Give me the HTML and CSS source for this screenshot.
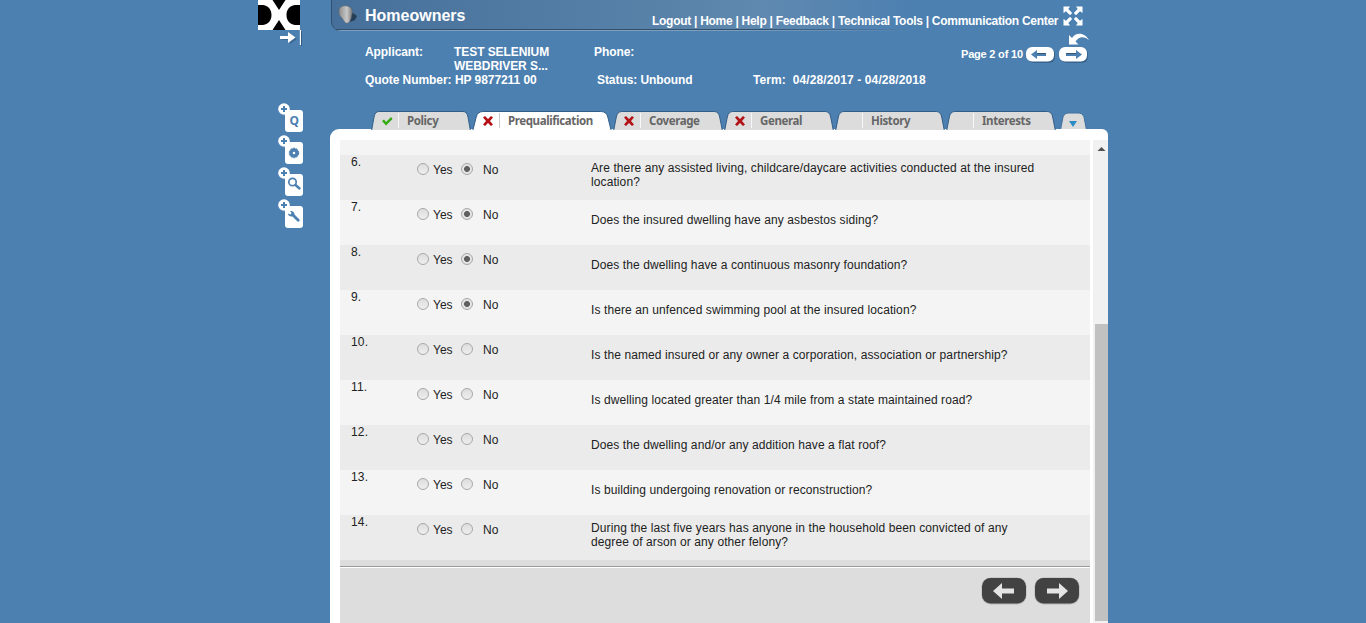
FILE: index.html
```html
<!DOCTYPE html>
<html lang="en">
<head>
<meta charset="utf-8">
<title>Homeowners</title>
<link rel="stylesheet" href="styles.css">
</head>
<body>
<div class="page">
  <aside class="side">
    <svg class="logo" width="42" height="30" viewBox="0 0 42 30"><path fill="#fff" d="M0 0H42V30H0Z"/><path d="M0 5H5C11 6 13.500 10 13.500 15S11 24 5 25H0ZM42 5H37C31 6 28.500 10 28.500 15S31 24 37 25H42ZM14.500 0H27.500L21 10ZM14.500 30H27.500L21 20Z"/></svg>
    <svg class="collapse" width="23" height="16" viewBox="0 0 23 16"><path d="M3 8H11V4L18 9L11 14V10H3Z" fill="#345c82" opacity=".7"/><path d="M1 6H9V2L16.500 7.500L9 13V9H1Z" fill="#fff"/><path d="M21.500 0V15" stroke="#fff" stroke-width="1.300"/><path d="M22.500 1V16" stroke="#345c82"/></svg>
    <nav class="tools">
      <svg width="26" height="32" viewBox="0 0 26 32"><use href="#tile"/><text class="q" x="11.500" y="22">Q</text></svg>
      <svg width="26" height="32" viewBox="0 0 26 32"><use href="#tile"/><circle cx="16" cy="18" r="3" fill="none" stroke="#4c80b1" stroke-width="3.400"/><circle cx="16" cy="18" r="4.800" fill="none" stroke="#4c80b1" stroke-width="1" stroke-dasharray="2 1.016"/></svg>
      <svg width="26" height="32" viewBox="0 0 26 32"><use href="#tile"/><circle cx="14.500" cy="15" r="3.700" fill="none" stroke="#4c80b1" stroke-width="1.700"/><path d="M17.500 18L21.500 21.500" stroke="#4c80b1" stroke-width="2.400" stroke-linecap="round"/></svg>
      <svg width="26" height="32" viewBox="0 0 26 32"><use href="#tile"/><path d="M10 14.500L12.500 15.500L13.500 14L12 12C14.500 11.500 16.500 13 16.500 15.500L21.500 20.500C22 22 21 23 19.500 22.500L14.500 17.500C12 18 10 16.500 10 14.500Z" fill="#4c80b1"/></svg>
    </nav>
  </aside>
  <main class="main">
    <header class="bar">
      <svg class="bulb" width="20" height="20" viewBox="0 0 20 20"><path d="M12 6L15 8L19 11L17 15L12 17Z" fill="#263e55"/><path d="M1 7C0 2 5 0 9 1C14 2 15 6 14 9C13 12 13 17 10 18C7 19 6 16 4 13C2 11 1 10 1 7Z" fill="url(#bulb)" stroke="#596570" stroke-width=".6"/></svg>
      <h1>Homeowners</h1>
      <div class="links">Logout | Home | Help | Feedback | Technical Tools | Communication Center</div>
      <svg class="expand" width="20" height="20" viewBox="0 0 20 20"><g fill="#fff"><path id="ex" d="M.500 .500H7L5.300 3L9.200 7L7 9.200L3 5.300L.500 7Z"/><use href="#ex" transform="matrix(-1 0 0 1 20 0)"/><use href="#ex" transform="matrix(1 0 0 -1 0 20)"/><use href="#ex" transform="rotate(180 10 10)"/></g></svg>
    </header>
    <section class="info">
      <b>Applicant:</b><span class="b">TEST SELENIUM<br>WEBDRIVER S...</span><b>Phone:</b><i></i>
      <b>Quote Number:</b><span class="b quote">HP 9877211 00</span><b class="status">Status: Unbound</b><b class="term">Term:&nbsp; 04/28/2017 - 04/28/2018</b>
      <div class="pager">
        <svg class="undo" width="22" height="14" viewBox="0 0 22 14"><path d="M1 3V12.500H10.500L7.500 9.500C11 4 17 4 21 8.500C18 1 8 -1 4 6Z" fill="#fff"/></svg>
        <div class="pages"><span>Page 2 of 10</span>
        <svg width="30" height="17" viewBox="0 0 30 17"><rect x="2" y="2" width="27" height="15" rx="6" fill="#37638c"/><rect x="0" y="1" width="28" height="14.500" rx="6" fill="#fff"/><path d="M5 8.500L11 4V7.500H20V10H11V13Z" fill="#4c80b1"/><path d="M11 7.500H20" stroke="#345674"/></svg>
        <svg width="30" height="17" viewBox="0 0 30 17"><rect x="2" y="2" width="27" height="15" rx="6" fill="#37638c"/><rect x="0" y="1" width="28" height="14.500" rx="6" fill="#fff"/><path d="M23 8.500L17 4V7.500H7V10H17V13Z" fill="#4c80b1"/><path d="M7 7.500H17" stroke="#345674"/></svg></div>
      </div>
    </section>
    <nav class="tabs">
      <div class="tab t1"><svg class="shape" viewBox="0 0 100 20" preserveAspectRatio="none"><use href="#tab"/></svg><svg class="mark" viewBox="0 0 12 12"><path d="M1 6L3 4.500L5 7L10 2L11.500 4L5 10.500Z" fill="#3a1"/></svg><span>Policy</span></div>
      <div class="tab t2 active"><svg class="shape" viewBox="0 0 100 20" preserveAspectRatio="none"><use href="#tab"/></svg><svg class="mark" viewBox="0 0 12 12"><use href="#cross"/></svg><span>Prequalification</span></div>
      <div class="tab"><svg class="shape" viewBox="0 0 100 20" preserveAspectRatio="none"><use href="#tab"/></svg><svg class="mark" viewBox="0 0 12 12"><use href="#cross"/></svg><span>Coverage</span></div>
      <div class="tab"><svg class="shape" viewBox="0 0 100 20" preserveAspectRatio="none"><use href="#tab"/></svg><svg class="mark" viewBox="0 0 12 12"><use href="#cross"/></svg><span>General</span></div>
      <div class="tab"><svg class="shape" viewBox="0 0 100 20" preserveAspectRatio="none"><use href="#tab"/></svg><svg class="mark"></svg><span>History</span></div>
      <div class="tab"><svg class="shape" viewBox="0 0 100 20" preserveAspectRatio="none"><use href="#tab"/></svg><svg class="mark"></svg><span>Interests</span></div>
      <svg class="more" width="27" height="18" viewBox="0 0 27 18"><path d="M.500 19L3 6Q4 2 8 2H19Q23 2 24 6L26.500 19Z" fill="#dcdcdc" stroke="#41719e"/><path d="M9 10H17L13 16Z" fill="#2b8bc4"/></svg>
    </nav>
    <section class="panel">
      <div class="content">
        <div class="strip"></div>
        <div class="row"><span class="n">6.</span><div class="choice"><i class="radio"></i><span>Yes</span><i class="radio on"></i><span>No</span></div><p>Are there any assisted living, childcare/daycare activities conducted at the insured<br>location?</p></div>
        <div class="row"><span class="n">7.</span><div class="choice"><i class="radio"></i><span>Yes</span><i class="radio on"></i><span>No</span></div><p>Does the insured dwelling have any asbestos siding?</p></div>
        <div class="row"><span class="n">8.</span><div class="choice"><i class="radio"></i><span>Yes</span><i class="radio on"></i><span>No</span></div><p>Does the dwelling have a continuous masonry foundation?</p></div>
        <div class="row"><span class="n">9.</span><div class="choice"><i class="radio"></i><span>Yes</span><i class="radio on"></i><span>No</span></div><p>Is there an unfenced swimming pool at the insured location?</p></div>
        <div class="row"><span class="n">10.</span><div class="choice"><i class="radio"></i><span>Yes</span><i class="radio"></i><span>No</span></div><p>Is the named insured or any owner a corporation, association or partnership?</p></div>
        <div class="row"><span class="n">11.</span><div class="choice"><i class="radio"></i><span>Yes</span><i class="radio"></i><span>No</span></div><p>Is dwelling located greater than 1/4 mile from a state maintained road?</p></div>
        <div class="row"><span class="n">12.</span><div class="choice"><i class="radio"></i><span>Yes</span><i class="radio"></i><span>No</span></div><p>Does the dwelling and/or any addition have a flat roof?</p></div>
        <div class="row"><span class="n">13.</span><div class="choice"><i class="radio"></i><span>Yes</span><i class="radio"></i><span>No</span></div><p>Is building undergoing renovation or reconstruction?</p></div>
        <div class="row"><span class="n">14.</span><div class="choice"><i class="radio"></i><span>Yes</span><i class="radio"></i><span>No</span></div><p>During the last five years has anyone in the household been convicted of any<br>degree of arson or any other felony?</p></div>
        <div class="gap"></div>
        <div class="foot">
          <svg width="46" height="28" viewBox="0 0 46 28"><use href="#btn"/><path d="M12 14L21 6V11.500H33V16.500H21V22Z" fill="#e4e4e4"/></svg>
          <svg width="46" height="28" viewBox="0 0 46 28"><use href="#btn"/><path d="M34 14L25 6V11.500H13V16.500H25V22Z" fill="#e4e4e4"/></svg>
        </div>
      </div>
      <div class="scroll"><svg width="15" height="184" viewBox="0 0 15 184"><path d="M4.500 11H12.500L8.500 7Z" fill="#505050"/></svg><div class="thumb"></div></div>
    </section>
  </main>
</div>
<svg class="defs" width="0" height="0">
  <defs>
    <linearGradient id="bulb"><stop offset="0" stop-color="#8c8c8c"/><stop offset=".6" stop-color="#c8c8c8"/><stop offset="1" stop-color="#777"/></linearGradient>
    <g id="tile"><rect x="7" y="7" width="18" height="22" rx="3" fill="#fff"/><circle cx="6" cy="6" r="5.800" fill="#fff"/><path d="M3 6H9M6 3V9" stroke="#4c80b1" stroke-width="2"/></g>
    <path id="tab" d="M.500 21L3 7Q4 1.500 8 1.500H92Q96 1.500 97 7L99.500 21" vector-effect="non-scaling-stroke"/>
    <path id="cross" d="M1 2.500L3 1L6 4L9 1L11 2.500L8 6L11 9.500L9 11L6 8L3 11L1 9.500L4 6Z" fill="#b31217"/>
    <g id="btn"><rect x=".5" y=".5" width="45" height="27" rx="9" fill="#b5b5b5"/><rect x="1" y="1" width="44" height="25.500" rx="8.500" fill="#424242"/></g>
  </defs>
</svg>
</body>
</html>
```
FILE: styles.css
```css
* { box-sizing: border-box; }
body { margin: 0; height: 623px; overflow: hidden; background: #4c80b1; font: 12px/14px "Liberation Sans", Arial, sans-serif; color: #222; }
.page { display: flex; padding-left: 258px; height: 623px; }
.defs { position: absolute; }
.side { width: 72px; display: flex; flex-direction: column; }
.side svg { display: block; flex: none; }
.collapse { margin-left: 21px; }
.tools { padding: 57px 0 0 20px; }
.q { font: bold 12px "Noto Sans", sans-serif; fill: #4c80b1; }
.main { width: 778px; display: flex; flex-direction: column; }
.bar { height: 31px; flex: none; display: flex; padding-left: 8px; color: #fff; margin-left: 1px; border-radius: 0 0 0 9px; border-left: 1px solid #31506e; background: linear-gradient(to right, #7f9fbd 50%, transparent 75%) bottom / 100% 1px no-repeat, linear-gradient(to right, #31506e 55%, transparent 75%) 0 29px / 100% 1px no-repeat, linear-gradient(to right, #46709a, #5a83aa 45%, #6089b0 55%, #4c80b1 75%); }
.bulb { margin: 5px 5px 0 -2px; flex: none; }
.bar h1 { margin: 6px 0 0 2px; width: 287px; font-size: 16px; line-height: 20px; }
.links { margin-top: 14px; width: 410px; font-weight: bold; white-space: nowrap; letter-spacing: -0.28px; }
.expand { margin: 6px 0 0 1px; flex: none; }
.info { height: 79px; flex: none; padding: 14px 0 0 35px; display: grid; grid-template-columns: 89px 140px 159px 206px 150px; grid-template-rows: 28px 14px; color: #fff; white-space: nowrap; letter-spacing: -0.07px; }
.b { font-weight: bold; }
.quote { padding-left: 1px; }
.status { padding-left: 3px; }
.term { letter-spacing: 0.1px; }
.pager { grid-column: 5; grid-row: 1 / 3; margin: -14px 0 0 2px; display: flex; flex-direction: column; }
.undo { margin: 1px 0 0 107px; }
.pages { display: flex; align-items: flex-start; height: 17px; }
.pages span { font-size: 11px; font-weight: bold; width: 65px; letter-spacing: -0.2px; padding-top: 1px; }
.pages svg { flex: none; margin-right: 3px; }
.tabs { height: 19px; flex: none; display: flex; padding-left: 41px; }
.tab { position: relative; width: 111px; height: 19px; display: flex; flex: none; font: bold 11.5px/19px "Noto Sans", sans-serif; letter-spacing: -0.4px; color: #666; }
.shape { position: absolute; width: calc(100% - 1px); height: 20px; top: 0; left: 0; fill: #dcdcdc; stroke: #315d87; stroke-width: 1px; overflow: hidden; }
.active .shape { fill: #fff; }
.t1 { width: 101px; }
.t2 { width: 141px; }
.mark { position: relative; width: 12px; height: 12px; margin: 5px 0 0 10px; flex: none; }
.tab span { position: relative; margin: 3px 0 0 5px; flex: 1; border-left: 1px solid #f8f8f8; height: 15px; line-height: 16px; padding-left: 8px; }
.active span { border-color: #ccc; }
.more { margin: 1px 0 0 3px; }
.panel { flex: 1; background: #fff; border-radius: 9px 6px 0 0; display: flex; padding: 11px 0 0 10px; }
.content { width: 750px; display: flex; flex-direction: column; }
.strip { height: 15px; background: #f4f4f4; }
.row { height: 45px; display: grid; grid-template-columns: 77px 174px 1fr; background: #f4f4f4; }
.row:nth-child(even) { background: #ebebeb; }
.n { padding-left: 11px; letter-spacing: 0.2px; }
.choice { display: flex; align-items: flex-start; padding-top: 8px; }
.choice span { margin-left: 4px; width: 28px; }
.choice span:last-child { margin-left: 10px; }
.radio { width: 12px; height: 12px; flex: none; border: 1px solid #a8a8a8; border-radius: 50%; background: linear-gradient(#ddd, #eee); }
.radio.on { background: radial-gradient(circle, #606060 2.6px, #e4e4e4 3.3px); }
.row p { margin: 0; align-self: center; white-space: nowrap; padding-bottom: 6px; letter-spacing: 0.1px; }
.row:nth-child(2) p, .row:nth-child(10) p { padding-bottom: 5px; }
.gap { height: 8px; background: #ddd; border-bottom: 1px solid #fff; box-shadow: inset 0 -1px #999; }
.foot { flex: 1; background: #ddd; display: flex; justify-content: flex-end; gap: 7px; padding: 9px 10px 0 0; }
.scroll { margin-left: 3px; width: 15px; background: #f1f1f1; display: flex; flex-direction: column; }
.scroll svg { display: block; }
.thumb { height: 297px; margin-left: 2px; background: #c1c1c1; }
```
